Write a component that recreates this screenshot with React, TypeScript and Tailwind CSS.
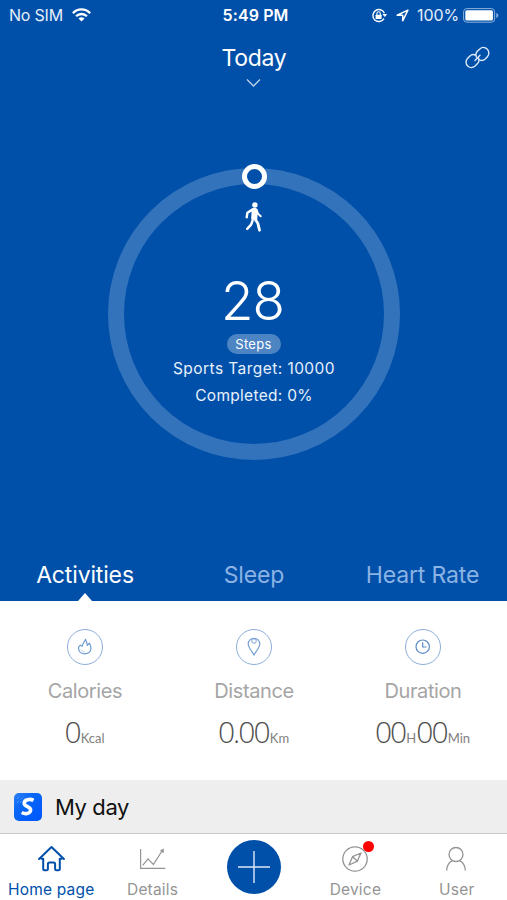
import React from "react";

type IconProps = { className?: string };

function Wifi() {
  return (
    <svg className="ml-[9px] h-[14px] w-[19px]" viewBox="0 0 19 14" fill="none" stroke="white" strokeWidth="2.3">
      <path d="M0.9 5.2C5.6 .2 13.4 .2 18.1 5.2" />
      <path d="M4.1 8.3C7.1 5.2 11.9 5.2 14.9 8.3" />
      <path d="M6.5 10.5C8.2 8.8 10.8 8.8 12.5 10.5L9.5 13.6Z" fill="white" stroke="none" />
    </svg>
  );
}

function RotationLock() {
  return (
    <svg className="h-[15px] w-[17px]" viewBox="0 0 17 15" fill="none" stroke="white">
      <path d="M13.4 5.2A6 6 0 1 0 13 10.7" strokeWidth="1.4" />
      <path d="M11.3 5.9H16.2L13.8 9Z" fill="white" stroke="none" />
      <rect x="4.6" y="6.7" width="6" height="4.3" rx=".6" fill="white" stroke="none" />
      <path d="M5.9 7V5.5a1.7 1.7 0 0 1 3.4 0V7" strokeWidth="1.1" />
    </svg>
  );
}

function LocationArrow() {
  return (
    <svg className="ml-[8px] h-[13px] w-[13px]" viewBox="0 0 13 13" fill="none" stroke="white" strokeWidth="1.5" strokeLinejoin="round">
      <path d="M11.9 1.1 1.1 6.2H6.7V11.8Z" />
    </svg>
  );
}

function Battery() {
  return (
    <svg className="ml-[4px] h-[15px] w-[36px]" viewBox="0 0 36 15" fill="none">
      <rect x=".6" y=".6" width="31" height="13.6" rx="3.2" stroke="#8db1dc" strokeWidth="1" />
      <rect x="2.3" y="2.3" width="27.6" height="10.2" rx="1.5" fill="white" />
      <path d="M33.3 5v5c1.6-.7 2-1.5 2-2.5s-.4-1.8-2-2.5Z" fill="#8db1dc" />
    </svg>
  );
}

function LinkIcon() {
  return (
    <svg className="h-[25px] w-[25px]" viewBox="0 0 25 25" fill="none" stroke="#e0eafa" strokeWidth="1.4" strokeLinecap="round">
      <path d="M14.5 14.9C16.8 16.2 18.9 15.3 20.2 14L22.4 11.7C24.4 9.6 24.3 6.2 22.1 4.1C20 2 16.9 2 14.8 3.9L12.6 6.1C10.7 8 10.6 10.3 11.5 12.2" />
      <path d="M10.4 10.2C8.2 8.9 6.1 9.8 4.7 11.2L2.5 13.4C.5 15.5.6 18.8 2.7 20.9C4.9 23 8 22.9 10.1 21L12.3 18.8C14.2 16.9 14.3 14.8 13.4 12.9" />
      <path d="M10 15.5 15 10.3" />
    </svg>
  );
}

function Walker() {
  return (
    <svg className="h-[30px] w-[17px]" viewBox="0 0 17 30" fill="none" stroke="white" strokeLinecap="round" strokeLinejoin="round">
      <circle cx="9.9" cy="3" r="2.7" fill="white" stroke="none" />
      <path d="M7 7.1Q9.5 5.8 11.7 7.2L12.1 11.5 11.6 17.5 6.8 17 7.1 11Z" fill="white" strokeWidth="1.2" />
      <path d="M7 7.9 2.4 10.7 1.7 15.2" strokeWidth="2.4" />
      <path d="M11.6 8 13 11.6 15.7 14.2" strokeWidth="2" />
      <path d="M10 17 12.8 21.2 14.5 28.2" strokeWidth="2.8" />
      <path d="M7.6 18.5 6.1 22.7 2.2 26.8" strokeWidth="2.5" />
    </svg>
  );
}

function Flame() {
  return (
    <svg className="h-[18px] w-[18px]" viewBox="0 0 18 18" fill="none" stroke="#709bd2" strokeWidth="1.2" strokeLinejoin="round">
      <path d="M9.4 1.3C9 3.7 6.5 5 6.2 8.3L4.4 7.3C2.6 8.5 2.2 10.3 2.9 12.1C3.8 14.6 6 15.9 8.7 15.8C12.3 15.7 14.8 13.6 14.9 10.6C15 8.5 14.2 6.6 13.5 5.2L11.3 7.3C11.1 4.9 10.4 3 9.4 1.3Z" />
      <path d="M5.2 11.3C5.6 13 6.9 13.9 8.7 13.8" strokeWidth=".5" />
    </svg>
  );
}

function Pin() {
  return (
    <svg className="h-[20px] w-[16px]" viewBox="0 0 16 20" fill="none" stroke="#709bd2" strokeWidth="1.1">
      <path d="M8 17.9C6.6 15 2.2 10.8 2.2 7A5.8 5.8 0 0 1 13.8 7C13.8 10.8 9.4 15 8 17.9Z" />
      <circle cx="8" cy="4" r="2.3" strokeWidth=".9" />
    </svg>
  );
}

function Clock() {
  return (
    <svg className="h-[16px] w-[16px]" viewBox="0 0 16 16" fill="none" stroke="#5c8bc9" strokeWidth="1.2">
      <circle cx="7.7" cy="7.7" r="6.7" />
      <path d="M7.7 3.2V8H11.5" />
    </svg>
  );
}

function Home({ className }: IconProps) {
  return (
    <svg className={className} viewBox="0 0 28 28" fill="none" stroke="currentColor" strokeWidth="2" strokeLinecap="round" strokeLinejoin="round">
      <path d="M2.1 14 14.5 2 26.9 14" />
      <path d="M4.4 13.7H6.2V23.7Q6.2 25.2 7.7 25.2H9.4Q10.9 25.2 10.9 23.7V19.2Q10.9 17.6 12.5 17.6H16.5Q18.1 17.6 18.1 19.2V23.7Q18.1 25.2 19.6 25.2H21.3Q22.8 25.2 22.8 23.7V13.7H24.6" />
    </svg>
  );
}

function Chart({ className }: IconProps) {
  return (
    <svg className={className} viewBox="0 0 28 28" fill="none" stroke="currentColor" strokeWidth="1.2">
      <path d="M2.6 4V23.4H27.3" />
      <path d="M4.7 20.4 10 13.8 15.4 19.5 24.6 5" />
      <path d="M22.3 5.7 25.5 3.9 25.5 7.7Z" fill="currentColor" strokeWidth=".6" />
    </svg>
  );
}

function Compass({ className }: IconProps) {
  return (
    <svg className={className} viewBox="0 0 28 28" fill="none" stroke="currentColor" strokeWidth="1.3" strokeLinejoin="round">
      <circle cx="14" cy="14" r="12.2" />
      <path d="M20 8 11.5 11.7 8 20 16.4 16.1Z" />
      <path d="m11.5 11.7 4.9 4.4" />
    </svg>
  );
}

function Person({ className }: IconProps) {
  return (
    <svg className={className} viewBox="0 0 28 28" fill="none" stroke="currentColor" strokeWidth="1.3">
      <circle cx="14" cy="9.5" r="7" />
      <path d="M4.7 25.5C4.8 20.7 7 17.4 10.4 15.6M17.6 15.6C21 17.4 23.2 20.7 23.3 25.5" />
    </svg>
  );
}

function Metric({ icon, name, children }: { icon: React.ReactNode; name: React.ReactNode; children: React.ReactNode }) {
  return (
    <div className="flex flex-col items-center pt-[28px]">
      <div className="flex h-9 w-9 items-center justify-center rounded-full border border-[#8caddb]">{icon}</div>
      <div className="mt-[12px] h-[28px] pl-[1px] text-[20px] leading-[28px] tracking-[-0.4px] text-[#a5a5a5]">{name}</div>
      <div className="mt-[7px] flex h-[40px] items-baseline font-['Lato',sans-serif] leading-[40px] text-[#505050]">{children}</div>
    </div>
  );
}

function Digits({ children }: { children: React.ReactNode }) {
  return <span className="font-['Open_Sans',sans-serif] text-[30px] font-light tracking-[-1.9px]">{children}</span>;
}

function Unit({ children }: { children: React.ReactNode }) {
  return <span className="ml-[1px] text-[13px] text-[#808080]">{children}</span>;
}

function Tab({ label, icon, active = false, badge = false }: { label: React.ReactNode; icon: React.ReactNode; active?: boolean; badge?: boolean }) {
  return (
    <div className={active ? "flex flex-col items-center pt-[11px] text-[#0050aa]" : "flex flex-col items-center pt-[11px] text-[#949494]"}>
      <div className="relative h-7 w-7">
        {icon}
        {badge && <span className="absolute -top-[4px] left-[22px] h-[11px] w-[11px] rounded-full bg-[#fe0000]" />}
      </div>
      <div className="mt-[6px] pl-[1px] text-[15.5px] leading-[22px] tracking-[0.2px] whitespace-nowrap">{label}</div>
    </div>
  );
}

export default function App() {
  return (
    <div className="flex h-[900px] w-[507px] flex-col overflow-hidden bg-white font-['Inter',sans-serif]">
      <header className="flex h-[601px] flex-col bg-[#0050aa] text-white">
        <div className="grid h-[30px] grid-cols-[1fr_auto_1fr] items-center pr-[8px] pl-[9px] text-[16px] leading-[30px]">
          <div className="flex items-center text-[#e5eefa]"><span className="tracking-[-0.2px]">No SIM</span><Wifi /></div>
          <div className="pl-[3px] font-semibold tracking-[0.1px]">5:49 PM</div>
          <div className="flex items-center justify-end text-[#e5eefa]">
            <RotationLock />
            <LocationArrow />
            <span className="ml-[8px] tracking-[-0.1px]">100%</span>
            <Battery />
          </div>
        </div>
        <div className="grid h-[66px] grid-cols-[1fr_auto_1fr] pt-[12px]">
          <span />
          <div className="flex flex-col items-center">
            <span className="pl-[1px] text-[23px] leading-[33px] tracking-[-0.3px]">Today</span>
            <svg className="mt-[3px] h-[10px] w-[15px]" viewBox="0 0 15 10" fill="none" stroke="#bcd1ec" strokeWidth="1.3">
              <path d="M1 1.5 7.5 8 14 1.5" />
            </svg>
          </div>
          <div className="flex justify-end pt-[3px] pr-[17px]"><LinkIcon /></div>
        </div>

        <div className="relative mt-[72px] flex h-[292px] w-[292px] flex-col items-center self-center rounded-full border-[16px] border-[#3373bb] pt-[18px]">
          <span className="absolute -top-[20px] left-[118px] h-[25px] w-[25px] rounded-full border-[5px] border-white bg-[#0050aa]" />
          <Walker />
          <div className="mt-[39px] h-[58px] pr-[2px] text-[53px] leading-[60px] font-[350] tracking-[-1px]">28</div>
          <div className="mt-[5px] flex h-[20px] w-[54px] items-center justify-center rounded-full bg-[#4d85c4] pt-[2px] text-[13px] tracking-[0.35px]">Steps</div>
          <div className="mt-[1px] pl-[1px] text-[15.5px] leading-[27px] tracking-[0.44px] whitespace-nowrap text-[#e8f0fb]">Sports Target: 10000</div>
          <div className="pl-[1px] text-[15.5px] leading-[27px] tracking-[0.3px] whitespace-nowrap text-[#e8f0fb]">Completed: 0%</div>
        </div>

        <nav className="mt-auto grid h-[46px] grid-cols-3 text-center text-[23px] leading-[38px] tracking-[-0.15px] text-[#8bb3e3]">
          <div className="flex flex-col items-center text-white">
            <span className="h-[38px] pt-[1px] pl-[1px]">Activities</span>
            <svg className="h-[8px] w-[14px]" viewBox="0 0 14 8" fill="white"><path d="M7 0 14 8H0Z" /></svg>
          </div>
          <span className="pt-[1px] pl-[1px]">Sleep</span>
          <span className="pt-[1px]">Heart Rate</span>
        </nav>
      </header>

      <section className="grid h-[179px] grid-cols-3 bg-white">
        <Metric icon={<Flame />} name="Calories">
          <Digits>0</Digits><Unit>Kcal</Unit>
        </Metric>
        <Metric icon={<Pin />} name="Distance">
          <Digits>0.00</Digits><Unit>Km</Unit>
        </Metric>
        <Metric icon={<Clock />} name="Duration">
          <Digits>00</Digits><Unit>H</Unit><Digits>00</Digits><Unit>Min</Unit>
        </Metric>
      </section>

      <section className="flex h-[53px] items-center bg-[#eeeeee] pl-[14px]">
        <svg className="h-[28px] w-[28px]" viewBox="0 0 28 28">
          <defs>
            <linearGradient id="tile" x1="0" y1="0" x2="1" y2="1">
              <stop offset="0" stopColor="#2c80f3" />
              <stop offset=".35" stopColor="#0867f5" />
              <stop offset="1" stopColor="#0056ff" />
            </linearGradient>
          </defs>
          <rect width="28" height="28" rx="5" fill="url(#tile)" />
          <path d="M3 10 10 3M3 6l3-3M6 10l6-6" stroke="#63a4fb" strokeWidth="1" strokeDasharray="1 1" />
          <path d="M19.5 7.4C16 5.5 10.3 6.4 10.2 10.2C10.1 14.1 17.3 13.4 16.6 17.3C16 21 11.2 21.3 7.7 19.5" fill="none" stroke="white" strokeWidth="3.6" />
        </svg>
        <span className="ml-[13px] pt-[2px] text-[22px] tracking-[-0.4px] text-[#111]">My day</span>
      </section>

      <footer className="grid h-[67px] grid-cols-5 border-t border-[#c8c8c8] bg-white">
        <Tab active label="Home page" icon={<Home className="h-7 w-7" />} />
        <Tab label="Details" icon={<Chart className="h-7 w-7" />} />
        <div className="flex justify-center pt-[6px] pl-[1px]">
          <div className="flex h-[54px] w-[54px] items-center justify-center rounded-full bg-[#0050aa]">
            <svg className="h-[34px] w-[34px]" viewBox="0 0 34 34" stroke="#dce8f7" strokeWidth="1.4"><path d="M17 1V33M1 17H33" /></svg>
          </div>
        </div>
        <Tab badge label="Device" icon={<Compass className="h-7 w-7" />} />
        <Tab label="User" icon={<Person className="h-7 w-7" />} />
      </footer>
    </div>
  );
}
